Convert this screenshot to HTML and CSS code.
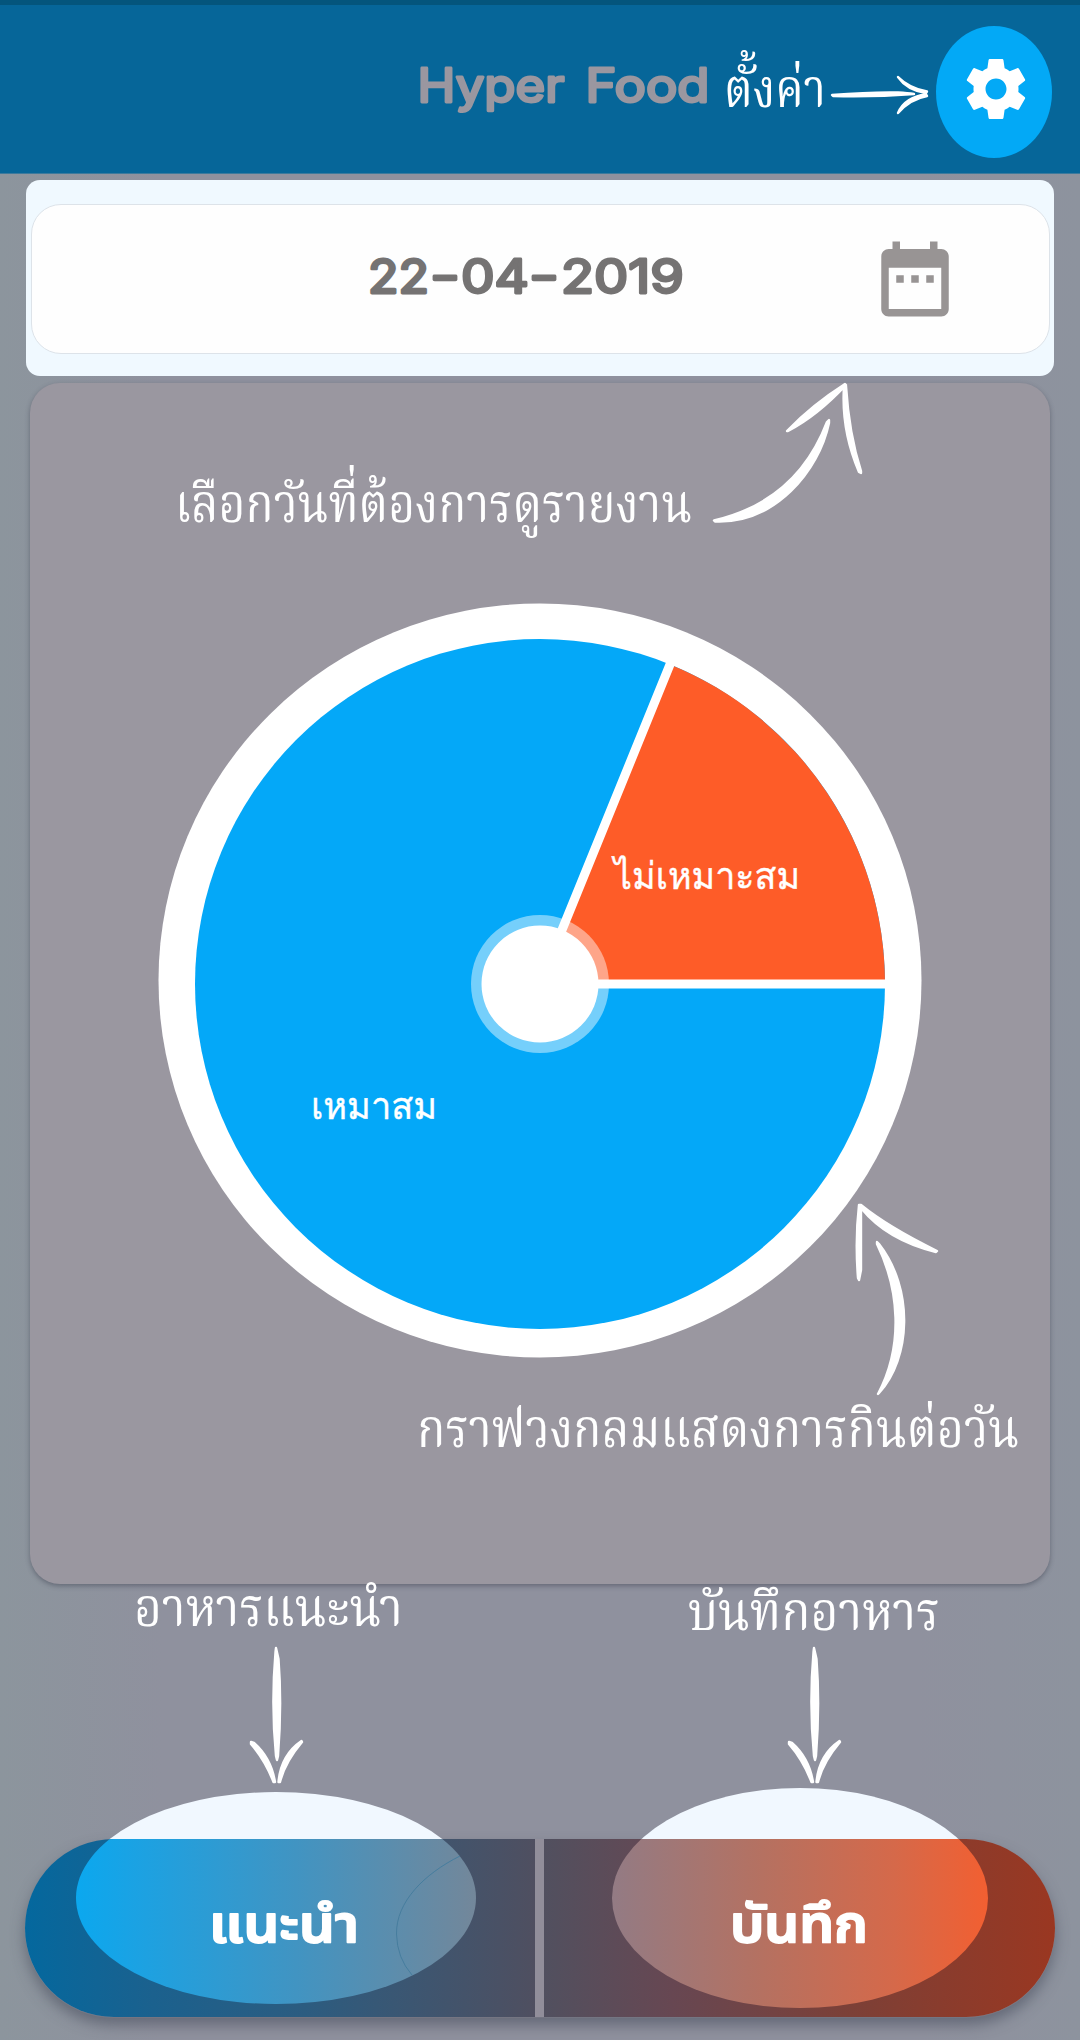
FILE: index.html
```html
<!DOCTYPE html>
<html lang="th">
<head>
<meta charset="utf-8">
<title>Hyper Food</title>
<link rel="stylesheet" href="styles.css">
</head>
<body>
<div class="screen">
  <header class="bar">
    <h1 class="title">
      <svg width="296" height="60" viewBox="416 56 296 60"><text class="rounded title-text" y="102"><tspan x="417.500" textLength="147" lengthAdjust="spacingAndGlyphs">Hyper</tspan> <tspan x="585.500" textLength="124" lengthAdjust="spacingAndGlyphs">Food</tspan></text></svg>
    </h1>
    <button class="settings" aria-label="ตั้งค่า">
      <svg width="72" height="72" viewBox="0 0 24 24"><path fill="#fff" d="M19.43 12.98c.04-.32.07-.64.07-.98s-.03-.66-.07-.98l2.11-1.65c.19-.15.24-.42.12-.64l-2-3.46c-.12-.22-.39-.3-.61-.22l-2.49 1c-.52-.4-1.08-.73-1.69-.98l-.38-2.65C14.46 2.18 14.25 2 14 2h-4c-.25 0-.46.18-.49.42l-.38 2.65c-.61.25-1.17.59-1.69.98l-2.49-1c-.23-.09-.49 0-.61.22l-2 3.46c-.13.22-.07.49.12.64l2.11 1.65c-.04.32-.07.65-.07.98s.03.66.07.98l-2.11 1.65c-.19.15-.24.42-.12.64l2 3.46c.12.22.39.3.61.22l2.49-1c.52.4 1.08.73 1.69.98l.38 2.65c.03.24.24.42.49.42h4c.25 0 .46-.18.49-.42l.38-2.65c.61-.25 1.17-.59 1.69-.98l2.49 1c.23.09.49 0 .61-.22l2-3.46c.12-.22.07-.49-.12-.64l-2.11-1.65zM12 15.500c-1.930 0-3.500-1.570-3.500-3.500s1.570-3.500 3.500-3.500 3.500 1.570 3.500 3.500-1.570 3.500-3.500 3.500z"/></svg>
    </button>
  </header>

  <section class="date-highlight">
    <div class="date-card">
      <svg class="date" width="320" height="60" viewBox="366 244 320 60"><text class="rounded date-text" y="292.500"><tspan x="368" textLength="61" lengthAdjust="spacingAndGlyphs">22</tspan><tspan x="430" y="291.500" textLength="30" lengthAdjust="spacingAndGlyphs">-</tspan><tspan x="461" y="292.500" textLength="68" lengthAdjust="spacingAndGlyphs">04</tspan><tspan x="529" y="291.500" textLength="30" lengthAdjust="spacingAndGlyphs">-</tspan><tspan x="561" y="292.500" textLength="123" lengthAdjust="spacingAndGlyphs">2019</tspan></text></svg>
      <svg class="calendar" width="90" height="90" viewBox="0 0 24 24"><path fill="#989494" d="M9 11H7v2h2v-2zm4 0h-2v2h2v-2zm4 0h-2v2h2v-2zm2-7h-1V2h-2v2H8V2H6v2H5c-1.11 0-1.99.9-1.99 2L3 20c0 1.100.89 2 2 2h14c1.100 0 2-.9 2-2V6c0-1.100-.9-2-2-2zm0 16H5V9h14v11z"/></svg>
    </div>
  </section>

  <section class="report">
    <svg class="chart" width="764" height="756" viewBox="158 602 764 756">
      <ellipse cx="540" cy="980.500" rx="381.500" ry="377" fill="#fff"/>
      <circle cx="540" cy="984" r="345" fill="#04a8f8"/>
      <path d="M540 984H885A345 345 0 0 0 670 664.400Z" fill="#fe5c28"/>
      <circle cx="540" cy="984" r="69" fill="#fff" fill-opacity=".45"/>
      <path d="M885 984H540L671 662" fill="none" stroke="#fff" stroke-width="9"/>
      <circle cx="540" cy="984" r="58.500" fill="#fff"/>
      <text class="slice" x="614" y="889" textLength="186" lengthAdjust="spacingAndGlyphs">ไม่เหมาะสม</text>
      <text class="slice" x="311" y="1119" textLength="126" lengthAdjust="spacingAndGlyphs">เหมาสม</text>
    </svg>
  </section>

  <nav class="actions">
    <span class="spotlight spotlight-suggest"></span>
    <span class="spotlight spotlight-record"></span>
    <button class="action action-suggest">
      <svg width="510" height="178" viewBox="25 1839 510 178">
        <defs><linearGradient id="lit-blue" gradientUnits="userSpaceOnUse" x1="76" x2="476" y1="0" y2="0"><stop offset="0" stop-color="#0ba8ef"/><stop offset=".15" stop-color="#1ba2e3"/><stop offset=".55" stop-color="#4194c2"/><stop offset="1" stop-color="#73879a"/></linearGradient></defs>
        <ellipse cx="276" cy="1898" rx="200" ry="106" fill="url(#lit-blue)"/>
        <path d="M460 1856C424 1874 396 1902 396.500 1934Q397 1958 412 1975" fill="none" stroke="#467d9e" stroke-width="1"/>
        <text class="label" x="209" y="1941.500" textLength="150" lengthAdjust="spacingAndGlyphs">แนะนำ</text>
      </svg>
    </button>
    <button class="action action-record">
      <svg width="511" height="178" viewBox="544 1839 511 178">
        <defs><linearGradient id="lit-orange" gradientUnits="userSpaceOnUse" x1="612" x2="988" y1="0" y2="0"><stop offset="0" stop-color="#937b84"/><stop offset=".4" stop-color="#b57161"/><stop offset=".75" stop-color="#d5694a"/><stop offset="1" stop-color="#f25f31"/></linearGradient></defs>
        <ellipse cx="800" cy="1898" rx="188" ry="110" fill="url(#lit-orange)"/>
        <text class="label" x="730" y="1941.500" textLength="138" lengthAdjust="spacingAndGlyphs">บันทึก</text>
      </svg>
    </button>
  </nav>

  <!-- tutorial notes and hand-drawn arrows -->
  <svg class="coach" width="1080" height="2040" viewBox="0 0 1080 2040" fill="#fff">
    <text class="note" x="724" y="107" textLength="102" lengthAdjust="spacingAndGlyphs">ตั้งค่า</text>
    <text class="note" x="175" y="522" textLength="517" lengthAdjust="spacingAndGlyphs">เลือกวันที่ต้องการดูรายงาน</text>
    <text class="note" x="417" y="1447" textLength="602" lengthAdjust="spacingAndGlyphs">กราฟวงกลมแสดงการกินต่อวัน</text>
    <text class="note" x="134" y="1626" textLength="269" lengthAdjust="spacingAndGlyphs">อาหารแนะนำ</text>
    <text class="note" x="688" y="1630" textLength="252" lengthAdjust="spacingAndGlyphs">บันทึกอาหาร</text>
    <g class="arrows">
      <path d="M832 95Q870 92 898 92.500Q908 93 914 94Q875 97 833 96ZM898 77Q909 88 927 91.500L926 93Q907 90 898 77ZM927 96Q910 99 898 113Q905 97 926 94.500Z"/>
      <path d="M714 520.500Q797 501 827 422L829 420L829 423C819 471 775 524 715 521.500ZM787 431Q812 405 845 384L846 385Q817 416 788 431ZM844 386H846Q849 434 861 471L861 473L859 472Q841 430 844 386Z"/>
      <path d="M877 1242L879 1244C914 1289 911 1358 879 1393L878 1394C904 1345 899 1289 877 1244ZM859 1205H861L861 1270L859 1280L858 1278Q855 1240 859 1205ZM861 1205Q888 1227 937 1251L936 1252Q887 1240 861 1208Z"/>
      <g id="down-arrow"><path d="M276 1648L278.500 1659Q282 1705 278 1756L277 1760L276 1756Q271 1705 275.500 1652ZM251 1742L254 1743Q271 1758 275 1782L273.500 1782Q265 1760 251 1744ZM301.500 1741L302 1742Q285 1762 280 1782L278.500 1782Q281 1755 301.500 1741Z"/></g>
      <use href="#down-arrow" x="538"/>
    </g>
  </svg>
</div>
</body>
</html>
```
FILE: styles.css
```css
* { box-sizing: border-box; }
body { margin: 0; }
button { border: 0; padding: 0; background: none; }
svg { display: block; overflow: visible; }

.screen {
  position: relative;
  width: 1080px;
  height: 2040px;
  overflow: hidden;
  background: linear-gradient(90deg, #8c959d, #8f919e 15%, #8f919e 85%, #8d939e);
  font-family: Inter, "Open Sans", sans-serif;
}

.bar {
  display: flex;
  align-items: flex-start;
  justify-content: flex-end;
  gap: 224px;
  height: 174px;
  padding: 21px 28px 0 0;
  border-top: 5px solid #04557c;
  border-bottom: 1px solid #3d7a9c;
  background: #066699;
}
.title { margin: 30px 0 0; }
.rounded {
  font-family: Inter, sans-serif;
  font-weight: 400;
  stroke-width: 2.8px;
  stroke-linejoin: round;
}
.title-text { font-size: 46px; fill: #9a97a0; stroke: #9a97a0; }
.date-text { font-size: 46px; fill: #757373; stroke: #757373; }
.settings {
  display: flex;
  align-items: center;
  justify-content: center;
  width: 116px;
  height: 132px;
  padding: 0 0 6px 4px;
  border-radius: 50%;
  background: #03a9f6;
}

.date-highlight {
  height: 196px;
  margin: 6px 26px 0;
  padding: 24px 4px 22px 5px;
  border-radius: 14px;
  background: #f0f9ff;
}
.date-card {
  display: flex;
  align-items: flex-start;
  justify-content: flex-end;
  gap: 184px;
  height: 150px;
  padding: 29px 89px 0 0;
  border: 1px solid #dde3e9;
  border-radius: 30px;
  background: #fefefe;
}
.date { margin-top: 10px; }

.report {
  height: 1201px;
  margin: 7px 30px 0 30px;
  padding: 219px 0 0 128px;
  border-radius: 30px;
  background: #9a97a0;
  box-shadow: 0 2px 5px rgba(50, 55, 70, .45);
}
.slice { font: 37px Loma, Garuda, "Noto Sans Thai", sans-serif; fill: #fff; stroke: #fff; stroke-width: .4px; }

.actions {
  position: relative;
  display: flex;
  gap: 9px;
  height: 178px;
  margin: 255px 25px 0;
  border-radius: 89px;
  background: #918e9a;
  box-shadow: 0 8px 14px rgba(60, 65, 82, .5), 0 1px 0 #a09ea8;
}
/* highlight ellipses that rise above the buttons */
.spotlight {
  position: absolute;
  border-radius: 50%;
  background: #f1f8ff;
}
.spotlight-suggest { left: 51px; top: -47px; width: 400px; height: 212px; }
.spotlight-record { left: 587px; top: -51px; width: 376px; height: 220px; }
.action { position: relative; overflow: hidden; }
.action-suggest {
  width: 510px;
  border-radius: 89px 0 0 89px;
  background: linear-gradient(90deg, #04689e, #1b618e 25%, #2c5c80 55%, #4f4f60);
}
.action-record {
  width: 511px;
  border-radius: 0 89px 89px 0;
  background: linear-gradient(90deg, #51505f, #674752 25%, #7c4037 60%, #9a3721);
}
.label {
  font: 600 51px "Noto Sans Thai", Waree, Loma, sans-serif;
  fill: #fff;
  stroke: #fff;
  stroke-width: 1.8px;
  stroke-linejoin: round;
}

.coach { position: absolute; inset: 0; pointer-events: none; }
.note { font: 54px Norasi, Kinnari, "Noto Serif Thai", serif; }
.arrows { stroke: #fff; stroke-width: 2.4px; stroke-linejoin: round; }
```
